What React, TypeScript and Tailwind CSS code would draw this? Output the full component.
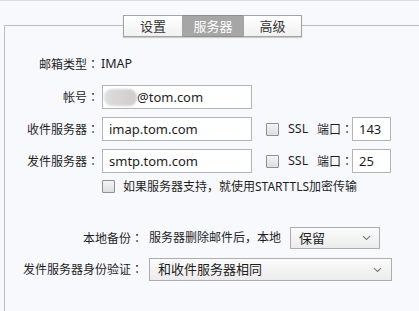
import React from "react";

const font = { fontFamily: '"Noto Sans","Noto Sans CJK SC",sans-serif' };

function C() {
  return <span style={{ fontFamily: '"Noto Sans CJK TC",sans-serif' }}>：</span>;
}

function Checkbox() {
  return (
    <div className="w-[13px] h-[13px] shrink-0 border border-[#8e8f8f] rounded-[1px] bg-gradient-to-b from-[#f4f4f4] to-[#dedede]" />
  );
}

function Chevron() {
  return (
    <svg width="9" height="6" viewBox="0 0 9 6" className="shrink-0">
      <path d="M1 1.2 L4.5 4.5 L8 1.2" fill="none" stroke="#7a7a7a" strokeWidth="1.1" />
    </svg>
  );
}

export default function App() {
  return (
    <div
      className="w-[419px] h-[311px] overflow-hidden bg-[#f8f9fd] border-t border-[#dcdde0] text-[#1e1e1e] leading-none whitespace-nowrap"
      style={font}
    >
      <div className="pt-[14px]">
        {/* tabs */}
        <div className="relative z-10 ml-[4px] w-[417px] flex justify-center">
          <div className="flex h-[22px] shadow-[0_1px_1px_rgba(0,0,0,0.18)]">
            <div className="w-[60px] h-full flex items-center justify-center border border-[#a3a3a3] bg-gradient-to-b from-[#ffffff] to-[#f1f1f1] text-[13px] text-[#333]">
              设置
            </div>
            <div className="w-[60px] h-full flex items-center justify-center border-y border-[#8e8e8e] bg-[#a6a6a6] text-[13px] text-white">
              服务器
            </div>
            <div className="w-[59px] h-full flex items-center justify-center border border-[#a3a3a3] bg-gradient-to-b from-[#ffffff] to-[#f1f1f1] text-[13px] text-[#333]">
              高级
            </div>
          </div>
        </div>

        {/* panel */}
        <div className="-mt-[12px] ml-[4px] w-[417px] h-[300px] border-l border-t border-[#bdbdbd] text-[12px]">
          {/* 邮箱类型 */}
          <div className="mt-[26px] h-[24px] flex items-center">
            <div className="w-[94px] text-right">邮箱类型<C /></div>
            <div className="ml-[2px] text-[12.5px]">IMAP</div>
          </div>

          {/* 帐号 */}
          <div className="mt-[9px] h-[24px] flex items-center">
            <div className="w-[94px] text-right">帐号<C /></div>
            <div className="ml-[3px] w-[150px] h-full border border-[#b4b4b4] bg-white flex items-center pl-[1px] text-[13px]">
              <div className="w-[33px] h-[17px] rounded-[8px] blur-[1px] bg-gradient-to-r from-[#dedede] via-[#d6d4d4] to-[#cfcccc]" />
              <span>@tom.com</span>
            </div>
          </div>

          {/* 收件服务器 */}
          <div className="mt-[8px] h-[24px] flex items-center">
            <div className="w-[94px] text-right">收件服务器<C /></div>
            <div className="ml-[3px] w-[150px] h-full border border-[#b4b4b4] bg-white flex items-center pl-[6px] text-[13px]">
              imap.tom.com
            </div>
            <div className="ml-[14px]">
              <Checkbox />
            </div>
            <div className="ml-[9px] w-[29px] text-[12.5px]">SSL</div>
            <div className="w-[35px] shrink-0">端口<C /></div>
            <div className="w-[39px] h-full border border-[#b4b4b4] bg-white flex items-center pl-[6px] text-[13px]">
              143
            </div>
          </div>

          {/* 发件服务器 */}
          <div className="mt-[8px] h-[24px] flex items-center">
            <div className="w-[94px] text-right">发件服务器<C /></div>
            <div className="ml-[3px] w-[150px] h-full border border-[#b4b4b4] bg-white flex items-center pl-[6px] text-[13px]">
              smtp.tom.com
            </div>
            <div className="ml-[14px]">
              <Checkbox />
            </div>
            <div className="ml-[9px] w-[29px] text-[12.5px]">SSL</div>
            <div className="w-[35px] shrink-0">端口<C /></div>
            <div className="w-[39px] h-full border border-[#b4b4b4] bg-white flex items-center pl-[6px] text-[13px]">
              25
            </div>
          </div>

          {/* STARTTLS */}
          <div className="mt-[7px] h-[13px] flex items-center">
            <div className="ml-[97px]">
              <Checkbox />
            </div>
            <div className="ml-[8px]">如果服务器支持，就使用STARTTLS加密传输</div>
          </div>

          {/* 本地备份 */}
          <div className="mt-[34px] h-[22px] flex items-center">
            <div className="w-[138px] text-right">本地备份<C /></div>
            <div className="ml-[6px]">服务器删除邮件后，本地</div>
            <div className="ml-[9px] w-[90px] h-full border border-[#adadad] bg-gradient-to-b from-[#fbfbfb] to-[#ececec] flex items-center justify-between pl-[8px] pr-[8px] text-[13px]">
              <span>保留</span>
              <Chevron />
            </div>
          </div>

          {/* 发件服务器身份验证 */}
          <div className="mt-[9px] h-[23px] flex items-center">
            <div className="w-[138px] text-right">发件服务器身份验证<C /></div>
            <div className="ml-[6px] w-[243px] h-full border border-[#adadad] bg-gradient-to-b from-[#fbfbfb] to-[#ececec] flex items-center justify-between pl-[8px] pr-[9px] text-[13px]">
              <span>和收件服务器相同</span>
              <Chevron />
            </div>
          </div>
        </div>
      </div>
    </div>
  );
}
